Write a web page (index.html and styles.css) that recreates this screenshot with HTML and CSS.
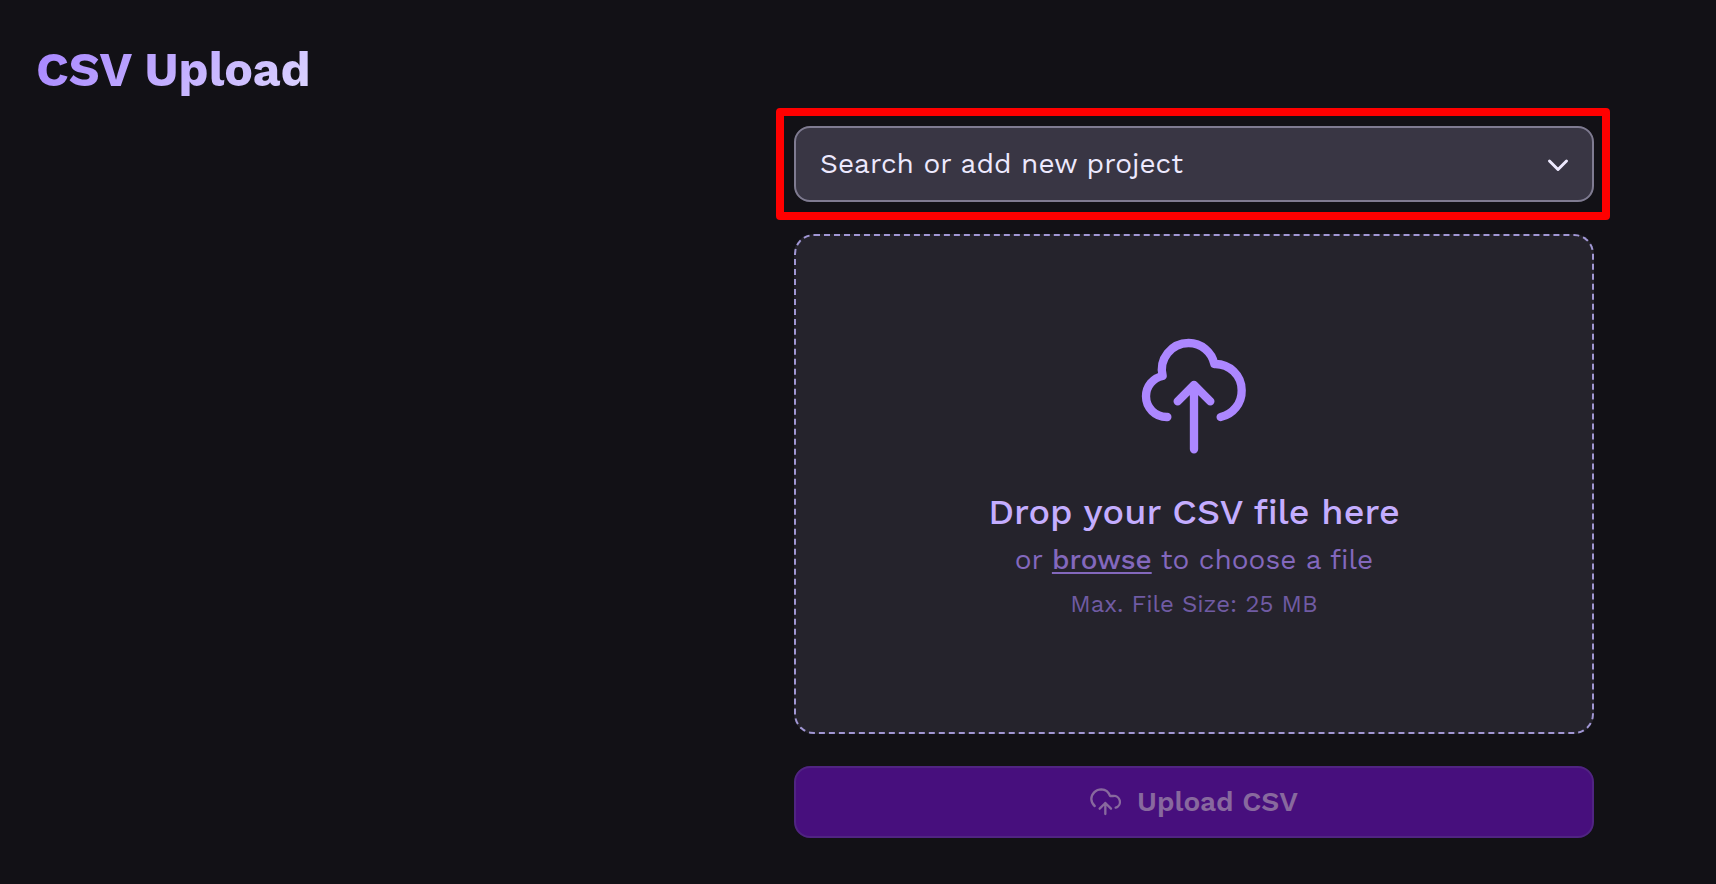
FILE: index.html
```
<!DOCTYPE html>
<html lang="en">
<head>
    <meta charset="UTF-8">
    <meta name="viewport" content="width=device-width, initial-scale=1">
    <title>CSV Upload</title>
    <link rel="stylesheet" href="styles.css">
</head>
<body>
    <main class="page">
        <h1 class="title">CSV Upload</h1>

        <form class="upload-form">
            <div class="highlight">
                <div class="project">
                    <select class="project-select" aria-label="Project">
                        <option>Search or add new project</option>
                    </select>
                    <svg class="chevron" viewBox="0 0 24 16" aria-hidden="true">
                        <path d="M3.500 5 12 13.500 20.500 5"/>
                    </svg>
                </div>
            </div>

            <div class="dropzone">
                <svg class="cloud" viewBox="57 48 330 360" aria-hidden="true">
                    <path d="M142 291H140A62 62 0 0 1 78 229A62 62 0 0 1 128 168A80 80 0 0 1 206 69A79 79 0 0 1 283 132A79 79 0 0 1 365 211A80 80 0 0 1 302 291"/>
                    <path d="M222 388V197M173 244 222 195 271 244"/>
                </svg>
                <p class="drop-title">Drop your CSV file here</p>
                <p class="drop-text">or <a class="browse" href="#">browse</a> to choose a file</p>
                <p class="drop-limit">Max. File Size: 25 MB</p>
            </div>

            <button class="submit" type="submit" disabled>
                <svg class="submit-icon" viewBox="80 112 93 87" aria-hidden="true">
                    <path d="M94 169A29 29 0 0 1 84 148A30 30 0 0 1 114 119A29 29 0 0 1 140 139H149A18 18 0 0 1 157 174"/>
                    <path d="M126 193V160M109 177 126 160 143 177"/>
                </svg>
                Upload CSV
            </button>
        </form>
    </main>
</body>
</html>
```
FILE: styles.css
```
* { box-sizing: border-box; }
body { margin: 0; min-height: 100vh; background: #121116; color: #ede9fe; font-family: "Work Sans", Inter, "Noto Sans", sans-serif; }
.page { padding: 40px 106px 44px 36px; }

.title { width: fit-content; margin: 0 0 8px; font-size: 48px; line-height: 60px; font-weight: 700; color: transparent; background: linear-gradient(135deg, #a684ff, #ddd6ff); background-clip: text; -webkit-background-clip: text; }

.upload-form { display: flex; flex-direction: column; max-width: 834px; margin-left: auto; }

/* project picker */
.highlight { padding: 10px 8px 10px 10px; border: 8px solid #ff0000; border-radius: 4px; margin-bottom: 14px; }
.project { display: grid; align-items: center; }
.project-select { grid-area: 1 / 1; width: 100%; height: 76px; padding: 0 64px 2px 24px; appearance: none; background: #393644; border: 2px solid #7f7b91; border-radius: 16px; color: #ede9fe; font: inherit; font-size: 28px; }
.chevron { grid-area: 1 / 1; justify-self: end; width: 24px; height: 16px; margin-right: 24px; fill: none; stroke: #ede9fe; stroke-width: 3; stroke-linecap: round; stroke-linejoin: round; pointer-events: none; }

/* drop area */
.dropzone { display: flex; flex-direction: column; align-items: center; justify-content: center; min-height: 500px; margin: 0 16px 32px 18px; padding-bottom: 6px; background: #25232c; border: 2px dashed #a197d4; border-radius: 20px; text-align: center; }
.cloud { width: 110px; height: 120px; margin-bottom: 30px; fill: none; stroke: #ac87ff; stroke-width: 25; stroke-linecap: round; stroke-linejoin: round; }
.dropzone p { margin: 0; }
.dropzone .drop-title { font-size: 36px; line-height: 52px; font-weight: 500; color: #c4adff; }
.dropzone .drop-text { font-size: 28px; line-height: 44px; color: #8368bd; }
.browse { color: inherit; font-weight: 500; text-decoration-thickness: 2px; text-underline-offset: 3px; }
.dropzone .drop-limit { font-size: 24px; line-height: 44px; color: #705ba3; }

.submit { display: flex; align-items: center; justify-content: center; gap: 16px; height: 72px; margin: 0 16px 0 18px; padding: 0 0 2px; background: #470f7d; border: 2px solid #502482; border-radius: 16px; color: #88699e; font: inherit; font-size: 28px; font-weight: 600; }
.submit-icon { width: 31px; height: 29px; fill: none; stroke: currentColor; stroke-width: 7; stroke-linecap: round; stroke-linejoin: round; }
```
